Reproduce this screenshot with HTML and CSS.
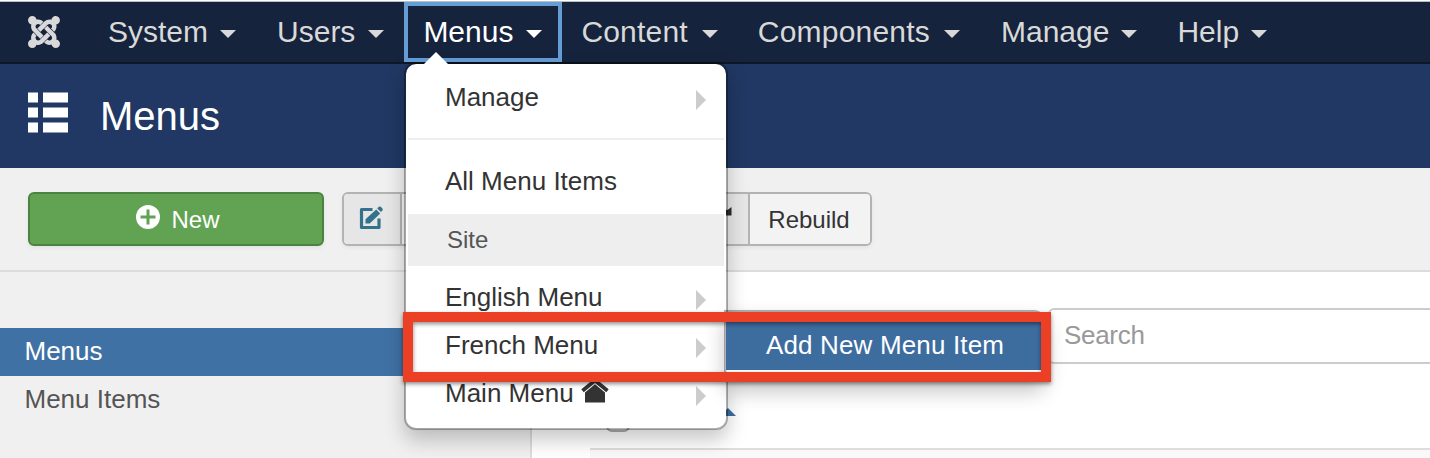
FILE: index.html
```html
<!DOCTYPE html>
<html lang="en">
<head>
<meta charset="utf-8">
<title>Menus</title>
<link rel="stylesheet" href="styles.css">
</head>
<body>
<nav class="navbar">
  <svg class="brand" viewBox="0 32 448 448"><path d="M.6 92.1C.6 58.8 27.4 32 60.4 32c30 0 54.5 21.9 59.2 50.2 32.6-7.6 67.1.6 96.5 30l-44.3 44.3c-20.5-20.5-42.6-16.3-55.4-3.5-14.3 14.3-14.3 37.9 0 52.2l99.5 99.5-44 44.3c-87.7-87.2-49.7-49.7-99.8-99.7-26.8-26.5-35-64.8-24.8-98.9C20.4 144.6.6 120.7.6 92.1zm129.5 116.4l44.3 44.3c10-10 89.7-89.7 99.7-99.8 14.3-14.3 37.6-14.3 51.9 0 12.8 12.8 17 35-3.5 55.4l44 44.3c31.2-31.2 38.5-67.6 28.9-101.2 29.2-4.1 51.9-29.2 51.9-59.5 0-33.2-26.8-60.1-59.8-60.1-30.3 0-55.4 22.5-59.5 51.6-33.8-9.9-71.7-1.5-98.3 25.1-18.3 19.1-71.1 71.5-99.6 99.9zm266.3 152.2c8.2-32.7-.9-68.5-26.3-93.9-11.8-12.2 5 4.7-99.5-99.7l-44.3 44.3 99.7 99.7c14.3 14.3 14.3 37.6 0 51.9-12.8 12.8-35 17-55.4-3.5l-44 44.3c27.6 30.2 68 38.8 102.7 28 5.5 27.4 29.7 48.1 58.9 48.1 33 0 59.8-26.8 59.8-60.1 0-30.2-22.5-55-51.6-59.1zm-84.3-53.1l-44-44.3c-87 86.4-50.4 50.4-99.7 99.8-14.3 14.3-37.6 14.3-51.9 0-13.1-13.4-16.9-35.3 3.2-55.4l-44-44.3c-30.2 30.2-38 65.2-29.5 98.3-26.7 6-46.2 29.9-46.2 58.2C0 453.2 26.8 480 59.8 480c28.6 0 52.5-19.8 58.6-46.7 32.7 8.2 68.5-.6 94.2-26 32.1-32 12.2-12.4 99.5-99.7z"/></svg>
  <a class="nav-item">System<i class="caret"></i></a>
  <a class="nav-item users">Users<i class="caret"></i></a>
  <a class="nav-item open">Menus<i class="caret"></i></a>
  <a class="nav-item content">Content<i class="caret"></i></a>
  <a class="nav-item components">Components<i class="caret"></i></a>
  <a class="nav-item">Manage<i class="caret"></i></a>
  <a class="nav-item">Help<i class="caret"></i></a>
</nav>
<header class="header">
  <svg class="list-icon" viewBox="0 0 40 42"><path d="M0 .5h10v10H0zM15 .5h25v10H15zM0 15.5h10v10H0zM15 15.5h25v10H15zM0 30.5h10v10H0zM15 30.5h25v10H15z"/></svg>
  <h1>Menus</h1>
</header>
<div class="toolbar">
  <button class="btn btn-new">
    <svg class="plus" viewBox="0 0 24 24"><circle cx="12" cy="12" r="12" fill="#fff"/><path d="M10.500 4.500h3v6h6v3h-6v6h-3v-6h-6v-3h6z" fill="#61a353"/></svg>
    <span>New</span>
  </button>
  <div class="group">
    <span class="addon edit"><svg viewBox="0 0 24 24"><path d="M13.500 3.500H2.500v18h17.500V12.500" fill="none" stroke="#34718c" stroke-width="3.200" stroke-linejoin="round"/><path d="M6.500 17.500v-4.200L17.200 3.400l4 4L10.700 17.500zM18.200 2.400l1.600-1.600q1-.8 2 0l1.600 1.700q.7 1 0 1.900l-1.400 1.700z" fill="#34718c"/></svg></span>
    <span class="hidden-part"></span>
    <span class="addon refresh"><svg viewBox="0 0 8 10"><path d="M0 3.300 3.500 4 7.500 1v8.500H0z" fill="#2b2b2b"/></svg></span>
    <button class="rebuild">Rebuild</button>
  </div>
</div>
<div class="page">
  <aside class="sidebar">
    <a class="side-link current">Menus</a>
    <a class="side-link">Menu Items</a>
  </aside>
  <main class="main">
    <div class="search">Search</div>
    <div class="table-head"><i class="check"></i><i class="sort"></i></div>
  </main>
</div>

<div class="dropdown">
  <i class="pointer"></i>
  <a class="item">Manage<i class="arrow"></i></a>
  <div class="divider"></div>
  <a class="item">All Menu Items</a>
  <div class="group-title">Site</div>
  <a class="item">English Menu<i class="arrow"></i></a>
  <a class="item">French Menu<i class="arrow"></i></a>
  <a class="item">Main Menu<svg class="home" viewBox="0 0 28 24"><path d="M4 23.500V13.500L14 5.300l10 8.200v10z"/><path d="M1.500 11.700 14 1.500l12.500 10.200" fill="none" stroke="#333" stroke-width="3.800"/></svg><i class="arrow"></i></a>
</div>
<div class="submenu"><a>Add New Menu Item</a></div>
<div class="marker"></div>
</body>
</html>
```
FILE: styles.css
```css
* { box-sizing: border-box; }
body {
  position: relative;
  margin: 0;
  width: 1430px;
  height: 458px;
  overflow: hidden;
  background: #fff;
  color: #333;
  font: 26px/48px "Liberation Sans", Arial, sans-serif;
}
h1 { margin: 0; font-weight: 400; }
button { margin: 0; font: inherit; }

.navbar {
  display: flex;
  align-items: center;
  height: 64px;
  padding: 0 0 0 28px;
  border-top: 1px solid #fff;
  border-bottom: 2px solid #0e1726;
  background: #15233c;
  box-shadow: inset 0 1px #b5bfc4;
}
.brand { width: 32px; height: 32px; margin: 0 44px 0 0; fill: #d9d9d9; }
.nav-item {
  display: flex;
  align-items: center;
  height: 60px;
  margin-top: 1px;
  margin-right: 37px;
  padding: 0 4px;
  color: #d9d9d9;
  font-size: 30px;
}
.nav-item:last-child { margin-right: 0; }
.caret {
  margin: 3px -4px 0 12px;
  border: 8px solid transparent;
  border-top-color: currentColor;
  border-bottom: 0;
}
.users .caret { margin-left: 13px; }
.open {
  width: 158px;
  margin-left: -17px;
  margin-right: 15px;
  padding: 0 0 0 15px;
  border: 4px solid #659dd5;
  color: #fff;
}
.open .caret { margin-left: 13px; }
.content { letter-spacing: .2px; }
.content .caret { margin-left: 14px; }
.components { margin-left: -1px; letter-spacing: .2px; }
.components .caret { margin-left: 14px; }
.components + .nav-item { margin-right: 36px; }

.header {
  display: flex;
  height: 104px;
  padding: 28px;
  gap: 32px;
  background: #203863;
  color: #fff;
}
.list-icon { width: 40px; height: 42px; fill: #fff; }
.header h1 { font-size: 40px; line-height: 48px; }

.toolbar {
  display: flex;
  gap: 18px;
  height: 104px;
  padding: 24px 28px;
  border-bottom: 2px solid #dcdcdc;
  background: #f0f0f0;
  font-size: 24px;
}
.btn-new {
  display: flex;
  align-items: center;
  justify-content: center;
  gap: 11px;
  width: 296px;
  height: 54px;
  padding: 0 0 0 4px;
  border: 2px solid #4a8440;
  border-radius: 6px;
  background: #61a353;
  box-shadow: 0 2px 4px rgba(0,0,0,.06);
  color: #fff;
}
.plus { width: 24px; height: 24px; margin-top: -4px; }
.btn-new span { padding-top: 1px; }
.group {
  display: flex;
  width: 530px;
  height: 54px;
  border: 2px solid #b3b3b3;
  border-radius: 6px;
  overflow: hidden;
  background: #f3f3f3;
  box-shadow: 0 2px 4px rgba(0,0,0,.05);
}
.addon { display: flex; background: #e6e6e6; }
.edit { width: 58px; border-right: 2px solid #b3b3b3; padding: 12px 0 0 15px; }
.edit svg { width: 24px; height: 24px; }
.hidden-part { width: 280px; }
.refresh { width: 68px; padding: 12px 0 0 42px; border-right: 2px solid #b3b3b3; }
.refresh svg { width: 8px; height: 10px; }
.rebuild {
  flex: 1;
  padding: 2px 2px 0 0;
  border: 0;
  background: #f3f3f3;
  color: #333;
}

.page { display: flex; height: 186px; }
.sidebar {
  display: flex;
  flex-direction: column;
  width: 532px;
  padding-top: 56px;
  border-right: 2px solid #dcdcdc;
  background: #f0f0f0;
}
.side-link { height: 48px; padding-left: 24.5px; line-height: 47px; color: #555; }
.current { background: #4071a5; color: #fff; }
.main { display: flex; flex-direction: column; width: 898px; padding: 36px 0 0 58px; }
.search {
  width: 420px;
  height: 56px;
  margin-left: 458px;
  padding-left: 14px;
  border: 2px solid #ccc;
  border-radius: 6px;
  color: #999;
  line-height: 51px;
  letter-spacing: -.3px;
}
.table-head {
  display: flex;
  align-items: flex-end;
  height: 86px;
  border-bottom: 2px solid #ddd;
}
.main::after { content: ""; height: 8px; background: #f9f9f9; }
.check { width: 24px; height: 24px; margin: 0 0 16px 16px; border: 2px solid #aaa; border-radius: 6px; }
.sort {
  margin: 0 0 32px 90px;
  border: 8px solid transparent;
  border-top: 0;
  border-bottom-color: #3d6c9f;
}

.dropdown {
  position: absolute;
  left: 404px;
  top: 62px;
  display: flex;
  flex-direction: column;
  width: 324px;
  height: 368px;
  padding: 10px 2px;
  border: 2px solid rgba(0,0,0,.3);
  border-radius: 12px;
  background: #fff;
  background-clip: padding-box;
  box-shadow: 0 10px 20px rgba(0,0,0,.22);
}
.pointer {
  position: absolute;
  left: 18px;
  top: -12px;
  border: 12px solid transparent;
  border-top: 0;
  border-bottom-color: #fff;
}
.item { display: flex; align-items: center; height: 48px; padding: 0 18px 2px 37px; }
.divider { height: 2px; margin: 16px 0 18px; background: #eee; }
.group-title { height: 52px; margin: 8px 0; padding-left: 39px; background: #eee; color: #555; font-size: 24px; line-height: 52px; }
.arrow {
  margin: 5px 0 0 auto;
  border: 10px solid transparent;
  border-left-color: #ccc;
  border-right: 0;
}
.home { width: 28px; height: 24px; margin: -4px 0 0 7px; fill: #333; }
.submenu {
  position: absolute;
  left: 724px;
  top: 310px;
  width: 322px;
  height: 72px;
  padding: 10px 0;
  border: 2px solid rgba(0,0,0,.3);
  border-radius: 0 12px 12px 12px;
  background: #fff;
  background-clip: padding-box;
  box-shadow: 0 10px 20px rgba(0,0,0,.22);
}
.submenu a { display: block; height: 48px; padding-left: 40px; background: #3d6c9f; color: #fff; line-height: 46px; letter-spacing: .15px; }
.marker {
  position: absolute;
  left: 403px;
  top: 312px;
  width: 648px;
  height: 70px;
  border: 10px solid #ec4026;
  box-shadow: 0 2px 4px rgba(0,0,0,.45), inset 0 2px 4px rgba(0,0,0,.45);
}
```
